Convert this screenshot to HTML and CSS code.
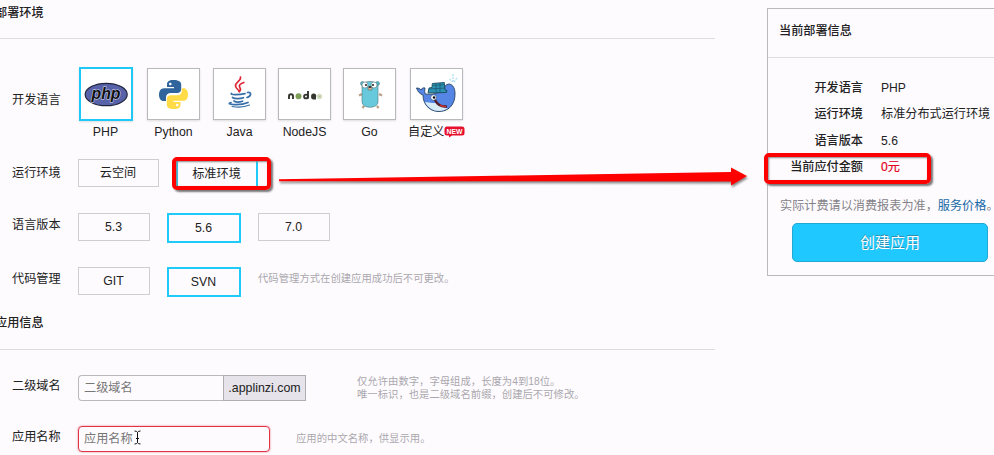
FILE: index.html
```html
<!DOCTYPE html>
<html lang="zh-CN">
<head>
<meta charset="utf-8">
<title>创建应用</title>
<link rel="stylesheet" href="styles.css">
</head>
<body>
<div class="page">
  <main class="main">
    <h2 class="heading">部署环境</h2>
    <div class="row row-lang">
      <div class="label">开发语言</div>
      <div class="langs">
        <div class="lang selected">
          <div class="tile"><svg width="50" height="50" viewBox="0 0 50 50"><ellipse cx="25.2" cy="25.5" rx="21" ry="11.2" fill="#5862a9" stroke="#20243d" stroke-width="1.2"/><text x="25" y="30" text-anchor="middle" class="php-text" textLength="29" lengthAdjust="spacingAndGlyphs">php</text></svg></div>
          <span>PHP</span>
        </div>
        <div class="lang">
          <div class="tile"><svg width="51" height="50" viewBox="0 0 51 50"><g transform="translate(11 11)"><path fill="#2f659c" d="M14.5 0C9.5 0 8 1.8 8 4.5V7h7v1.2H5C1.8 8.2 0 11 0 14.7 0 18.3 1.7 21 4.5 21H7v-3.500c0-2.800 2-4.500 4.700-4.500h6.500c2.300 0 4-1.600 4-4V4.500C22.200 1.700 19.500 0 14.500 0z"/><circle cx="11.300" cy="4" r="1.300" fill="#fff"/><path fill="#ffdb47" d="M14.500 29c5 0 7-1.600 7-4.300V22h-7v-1.200H24.500c3.100 0 4.500-2.700 4.500-6.300 0-3.700-1.600-6.300-4.500-6.300H22.800V11c0 2.700-2 4.300-4.500 4.300h-6.500c-2.300 0-4 1.600-4 4v5.200C7.800 27.500 10 29 14.500 29z"/><circle cx="18.200" cy="25" r="1.300" fill="#fff"/></g></svg></div>
          <span>Python</span>
        </div>
        <div class="lang">
          <div class="tile"><svg width="50" height="50" viewBox="0 0 50 50" fill="none" stroke-linecap="round"><g stroke="#dd2737" stroke-width="1.700"><path d="M26.500 8c1 4-5.500 5-5 9 .3 2.500 3 3.500 3.700 5.500"/><path d="M29.800 13.500c-4 1.500-5.300 3-4 5 1 1.500 1 2.800-.5 4"/></g><g stroke="#376fa8" stroke-width="1.700"><path d="M17.500 24.500c-2 1.300 7 1.500 13.500.2"/><path d="M18.500 28.500c2 1.500 8 1.200 11 .2"/><path d="M20 32c2 1.300 6 1 8.500.2"/><path d="M33.500 23.500c4.500-1 4 3.500-.5 5"/><path d="M17 33.500c-7 2 9 3.500 17 0"/><path d="M18 37.500c6 1 13 .5 17.500-1.500" stroke-width="1.100"/></g></svg></div>
          <span>Java</span>
        </div>
        <div class="lang">
          <div class="tile"><svg width="50" height="50" viewBox="0 0 50 50" fill="none"><g stroke="#34352e" stroke-width="1.900"><path d="M10 30v-3q0-1.800 2-1.800t2 1.800v3"/><circle cx="27" cy="27.500" r="1.900"/><path d="M29 22v7.500M37 29.500h-2.500q-1.500 0-1.500-2t1.700-2q2 0 1.500 2H34"/></g><circle cx="19.500" cy="27.300" r="3" fill="#7f9f59"/><circle cx="40.500" cy="27.500" r="2.700" fill="#d7dfc5"/><path d="M39.500 26.500h2v2h-2z" fill="#b5c398"/></svg></div>
          <span>NodeJS</span>
        </div>
        <div class="lang">
          <div class="tile"><svg width="51" height="50" viewBox="0 0 51 50"><g stroke="#53757c" stroke-width=".6"><path d="M18 25l-3 1.500M35 25l3 1.500M20 37l-1.500 2M33 37l1.500 2" stroke="#b89e83" stroke-width="2.200"/><circle cx="18.500" cy="14.500" r="2" fill="#55bdcb"/><circle cx="33.500" cy="14.500" r="2" fill="#55bdcb"/><path d="M18 17c0-6 16-6 16 0v16c0 7-16 7-16 0z" fill="#69c9dc"/><circle cx="21" cy="16" r="3" fill="#fff"/><circle cx="30" cy="16" r="3" fill="#fff"/><path d="M24 18h4v3h-4z" fill="#dfb58e"/></g><circle cx="22" cy="16" r=".9"/><circle cx="29" cy="16" r=".9"/><ellipse cx="26" cy="18" rx="1.500" ry="1" fill="#3b3029"/></svg></div>
          <span>Go</span>
        </div>
        <div class="lang">
          <div class="tile"><svg width="51" height="50" viewBox="0 0 51 50"><path d="M12 26c-3-1-5-3-6.500-7 2 0 3.500.5 4.500 2 .5-1.500 2-2.500 4-2-.5 3-.5 5 .5 6 7 1 13-1 18-3.500C33 13 43.500 12 44 24 44.500 36 37 43 27 42.500 18 42 12 35 12 26z" fill="#5585e5" stroke="#27435f" stroke-width=".9"/><path d="M14 33c5 1 10 1 13 1 3 4 6 5 10 5-7 5-18 4-23-6z" fill="#d8ecf5"/><path d="M17 24l1-5 3-.5.300-4 12-1 .7 7.500 2 .5-.5 2z" fill="#2c93b3" stroke="#18495f" stroke-width=".9"/><path d="M18 20l16-1M22 16.500l11-.8M25 14v9M29 14v9" stroke="#1b5975" stroke-width=".8"/><circle cx="22.500" cy="28.500" r="2.800" fill="#fff" stroke="#3b557f" stroke-width=".7"/><circle cx="23" cy="28.500" r="1.200"/><path d="M24 31c3 6 7 7 12 6.500" fill="none" stroke="#541f29" stroke-width="2.500"/><path d="M29 36q3 2 6 1.500" stroke="#d83332" stroke-width="1.200" fill="none"/><g stroke="#bfe6f5" stroke-width="1.700" stroke-dasharray="2 1"><path d="M42 5v9M38.500 10l3 3M46 9l-3 4"/></g></svg></div>
          <span>自定义<svg class="badge" width="21" height="12" viewBox="0 0 21 12"><path d="M3 .500h15q2.500 0 2.500 2.500v4q0 2.500-2.500 2.500H8L5 11.500V9.500H3Q.500 9.500.500 7V3Q.500.500 3 .500z" fill="#e60f2c"/><text x="10.500" y="7.600" text-anchor="middle" class="badge-text" textLength="16" lengthAdjust="spacingAndGlyphs">NEW</text></svg></span>
        </div>
      </div>
    </div>
    <div class="row row-env">
      <div class="label">运行环境</div>
      <div class="option wide">云空间</div>
      <div class="option env selected">标准环境<i class="mark mark-env"></i></div>
    </div>
    <div class="row row-version">
      <div class="label">语言版本</div>
      <div class="option">5.3</div>
      <div class="option selected">5.6</div>
      <div class="option">7.0</div>
    </div>
    <div class="row row-code">
      <div class="label">代码管理</div>
      <div class="option">GIT</div>
      <div class="option selected">SVN</div>
      <div class="note">代码管理方式在创建应用成功后不可更改。</div>
    </div>
    <h2 class="heading second">应用信息</h2>
    <div class="row row-domain">
      <div class="label">二级域名</div>
      <div class="field domain">二级域名</div>
      <div class="addon">.applinzi.com</div>
      <div class="note">仅允许由数字，字母组成，长度为4到18位。<br>唯一标识，也是二级域名前缀，创建后不可修改。</div>
    </div>
    <div class="row row-name">
      <div class="label">应用名称</div>
      <div class="field invalid">应用名称<svg class="caret" width="7" height="15" viewBox="0 0 7 15"><path d="M.500 1Q3 1 3.500 2.500 4 1 6.500 1M3.500 2.500v10M.500 14Q3 14 3.500 12.500 4 14 6.500 14M2 8.500h3" fill="none" stroke="#111"/></svg></div>
      <div class="note">应用的中文名称，供显示用。</div>
    </div>
  </main>
  <aside class="summary">
    <h3>当前部署信息</h3>
    <dl>
      <dt>开发语言</dt><dd>PHP</dd>
      <dt>运行环境</dt><dd>标准分布式运行环境</dd>
      <dt>语言版本</dt><dd>5.6</dd>
      <dt>当前应付金额</dt><dd class="price">0元</dd>
    </dl>
    <i class="mark mark-price"></i>
    <p>实际计费请以消费报表为准，<a>服务价格</a>。</p>
    <div class="create">创建应用</div>
  </aside>
</div>
<svg class="arrow" width="480" height="30" viewBox="0 0 480 30"><path d="M4 16.200L456 9V4.500L472 13 456 22.500V18.500L4 18.200z" fill="#fe0000"/></svg>
</body>
</html>
```
FILE: styles.css
```css
* { box-sizing: border-box; }
body {
  margin: 0;
  width: 994px;
  height: 455px;
  overflow: hidden;
  position: relative;
  background: #fefbff;
  color: #222;
  font: 12.15px/20px "Liberation Sans", "Noto Sans CJK SC", sans-serif;
}
.page { display: flex; align-items: flex-start; height: 455px; overflow: hidden; }
.main { width: 715px; flex: none; }
.heading {
  margin: 0;
  height: 39px;
  padding-top: 3px;
  border-bottom: 1px solid #dedce0;
  font-size: 12.15px;
  font-weight: 500;
  text-indent: -5px;
}
.second { height: 42px; padding-top: 5px; }
.row { display: flex; align-items: flex-start; white-space: nowrap; }
.label { width: 78px; flex: none; padding-left: 12px; }
.row-lang { height: 119px; padding-top: 28px; }
.row-lang .label { padding-top: 23px; }
.langs { display: grid; grid-template-columns: 68px 66px 65px 65px 67px 60px; margin-left: 1px; }
.lang { display: flex; flex-direction: column; align-items: flex-start; }
.lang > span { width: 53px; text-align: center; display: flex; justify-content: center; margin-top: 1px; font-size: 12.3px; }
.lang:last-child > span { justify-content: flex-start; margin-left: -2px; font-size: 12.15px; }
.tile {
  width: 53px;
  height: 52px;
  margin: 1px 0;
  border: 1px solid #b9b8bc;
  background: #fff;
  box-shadow: 0 1px 2px #ddd;
}
.tile svg { display: block; }
.lang.selected .tile { width: 54px; height: 54px; margin: 0; border: 2px solid #1ec8f7; }
.php-text { font: italic bold 17px "Liberation Sans", sans-serif; fill: #111; stroke: #dfe2f4; stroke-width: 1px; paint-order: stroke; }
.badge { flex: none; margin-top: 4px; }
.badge-text { font: bold 7px "Liberation Sans", sans-serif; fill: #fff; }
.option {
  position: relative;
  width: 72px;
  height: 28px;
  flex: none;
  border: 1px solid #cfced2;
  line-height: 27px;
  font-size: 12.3px;
  text-align: center;
  padding-right: 1px;
}
.option.selected { width: 74px; height: 30px; border: 2px solid #1ecbf8; line-height: 27px; }
.option + .option { margin-left: 17px; }
.option.wide { width: 81px; font-size: 12.15px; }
.option.env { width: 82px; margin-top: -1px; line-height: 28px; font-size: 12.15px; }
.row-env { height: 54px; padding-top: 1px; }
.row-env .label { padding-top: 4px; }
.row-version { height: 54px; padding-top: 1px; }
.row-version .label, .row-code .label { padding-top: 2px; }
.row-code { height: 42px; padding-top: 1px; }
.mark {
  position: absolute;
  border: 4px solid #fe0000;
  border-radius: 5px;
  box-shadow: 2px 2px 2px #777, inset 1px 1px 2px #888;
}
.mark-env { left: -6px; top: -3px; width: 99px; height: 33px; }
.note { color: #aaa8ad; font-size: 10.35px; line-height: 13px; }
.row-code .note { margin: 5px 0 0 17px; }
.row-domain { height: 76px; padding-top: 25px; }
.row-domain .label { padding-top: 1px; }
.row-domain .note { margin-left: 51px; }
.field {
  position: relative;
  width: 192px;
  height: 26px;
  border: 1px solid #b9b8bc;
  border-radius: 4px;
  padding-left: 5px;
  line-height: 25px;
  color: #777;
}
.domain { width: 145px; border-radius: 4px 0 0 4px; border-right: 0; }
.addon {
  width: 83px;
  height: 26px;
  border: 1px solid #b0aeb4;
  background: #e6e3ea;
  line-height: 25px;
  font-size: 12.4px;
  text-align: center;
}
.invalid { border-color: #df3346; box-shadow: 0 0 2px #e56b78; }
.row-name .label { padding-top: 1px; }
.row-name .note { margin: 6px 0 0 26px; }
.caret { position: absolute; left: 55px; top: 3px; }
.summary {
  position: relative;
  width: 240px;
  height: 268px;
  flex: none;
  margin: 8px 0 0 52px;
  border: 1px solid #bbb9be;
}
.summary h3 {
  margin: 0;
  height: 49px;
  padding: 12px 0 0 11px;
  border-bottom: 1px solid #dedce0;
  font-size: 12.15px;
  font-weight: 500;
}
dl {
  margin: 17px 0 0;
  display: grid;
  grid-template-columns: 95px 1fr;
  grid-auto-rows: 26.3px;
  column-gap: 18px;
  line-height: 27px;
  white-space: nowrap;
}
dt { text-align: right; font-weight: 500; }
dd { margin: 0; }
.price { color: #e2001d; -webkit-text-stroke: .2px #e2001d; }
.mark-price { left: -4px; top: 144px; width: 167px; height: 31px; }
.summary p { margin: 16px 0 0 12px; height: 27px; color: #858388; white-space: nowrap; }
.summary a { color: #1769a5; }
.create {
  width: 196px;
  height: 39px;
  margin: 0 0 0 24px;
  border: 1px solid #23a8d3;
  border-radius: 5px;
  background: #1fc9ff;
  color: #fff;
  font-size: 15px;
  line-height: 37px;
  text-align: center;
  text-shadow: 0 -1px 0 #318daf;
}
.arrow { position: absolute; left: 275px; top: 163px; filter: drop-shadow(1px 2px 1px #888); }
```
